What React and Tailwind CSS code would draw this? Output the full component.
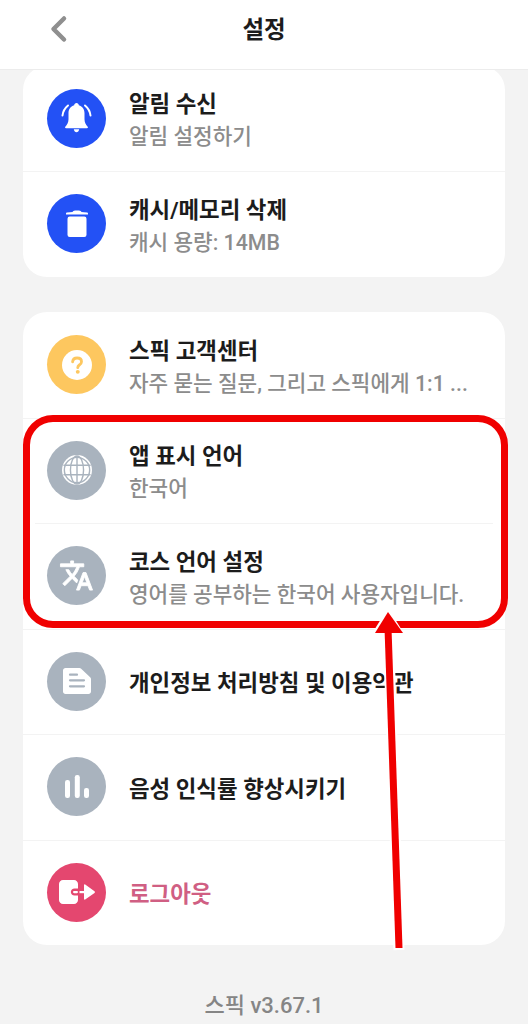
function BellIcon() {
  return (
    <svg viewBox="0 0 31 30" className="h-[30px] w-[31px]" fill="none">
      <path d="M15.500 0c1.300 0 2.200 1 2.300 2.200 3.800 1 5.700 4.200 5.700 8v6c0 3 1.500 5.500 3.200 7.500.5.700.2 1.500-.7 1.500H5c-.9 0-1.200-.8-.7-1.500 1.700-2 3.200-4.500 3.200-7.500v-6c0-3.800 1.900-7 5.700-8 .1-1.200 1-2.200 2.300-2.200z" fill="#fff" />
      <path d="M12.800 26.300h5.400c-.3 1.900-1.400 3-2.700 3s-2.400-1.100-2.700-3z" fill="#fff" />
      <path d="M1.500 12.500C2 8 4 5 7 2.500M29.500 12.500C29 8 27 5 24 2.500" stroke="#fff" strokeWidth="2" strokeLinecap="round" />
    </svg>
  );
}

function TrashIcon() {
  return (
    <svg viewBox="0 0 22 27" className="h-[27px] w-[22px]" fill="#fff">
      <path d="M0 3.600c0-.5.4-.9.900-1 2-.3 4-.6 5.600-.7C7 1 8.500.5 11 .5s4 .5 4.500 1.400c1.600.1 3.600.4 5.600.7.500.1.900.5.900 1v.9H0z" />
      <rect x="1.500" y="6.500" width="19" height="20.500" rx="2.200" />
    </svg>
  );
}

function HelpIcon() {
  return (
    <svg viewBox="0 0 32 32" className="h-[30px] w-[30px]">
      <circle cx="16" cy="16" r="16" fill="#fff" />
      <path d="M11.300 12.700c.2-2.600 2.100-4.200 4.800-4.200 2.800 0 4.700 1.600 4.700 3.900 0 1.700-1 2.700-2.300 3.600-1.100.8-1.700 1.400-1.700 2.800" fill="none" stroke="#fdc75f" strokeWidth="3" strokeLinecap="round" />
      <circle cx="16.800" cy="23.300" r="2.100" fill="#fdc75f" />
    </svg>
  );
}

function GlobeIcon() {
  return (
    <svg viewBox="0 0 32 32" className="h-[30px] w-[30px]">
      <circle cx="16" cy="16" r="16" fill="#fff" />
      <g fill="none" stroke="#a9b3be" strokeWidth="1.500">
        <circle cx="16" cy="16" r="13.500" />
        <ellipse cx="16" cy="16" rx="7" ry="15" />
        <path d="M16 1v30M1.500 11h29M1.500 21h29" />
      </g>
    </svg>
  );
}

function TranslateIcon() {
  return (
    <svg viewBox="0 0 24 24" className="h-[35px] w-[35px]" fill="#fff" stroke="#fff" strokeWidth="0.6">
      <path d="M12.870 15.070l-2.540-2.510.03-.03A17.520 17.520 0 0 0 14.070 6H17V4h-7V2H8v2H1v1.990h11.170C11.500 7.920 10.440 9.750 9 11.350 8.070 10.320 7.300 9.190 6.690 8h-2c.73 1.630 1.730 3.170 2.980 4.560l-5.090 5.020L4 19l5-5 3.110 3.110.76-2.040zM18.500 10h-2L12 22h2l1.120-3h4.750L21 22h2l-4.500-12zm-2.620 7l1.620-4.330L19.120 17h-3.240z" />
    </svg>
  );
}

function DocIcon() {
  return (
    <svg viewBox="0 0 28 26" className="h-[26px] w-[28px]">
      <path d="M0 2.500C0 1.100 1.100 0 2.500 0h14c.5 0 1 .2 1.400.6l9.500 9c.4.4.6.9.6 1.400v12.500c0 1.400-1.100 2.500-2.500 2.500H2.500C1.100 26 0 24.900 0 23.500z" fill="#fff" />
      <path d="M7 6.700h7M7 12.300h14M7 18.300h14" stroke="#a9b3be" strokeWidth="2.200" strokeLinecap="round" />
    </svg>
  );
}

function BarsIcon() {
  return (
    <svg viewBox="0 0 24 23" className="h-[23px] w-[24px]" fill="#fff">
      <rect x="0" y="5" width="5" height="18" rx="2.200" />
      <rect x="9.800" y="0" width="5" height="23" rx="2.200" />
      <rect x="19" y="13" width="5" height="10" rx="2.200" />
    </svg>
  );
}

function LogoutIcon() {
  return (
    <svg viewBox="0 0 36 24" className="h-[24px] w-[36px]" fill="#fff">
      <path d="M0 4c0-2.200 1.800-4 4-4h11c2.200 0 4 1.800 4 4v4.500h-3.500c-2.100 0-3.700 1.600-3.700 3.500s1.600 3.500 3.700 3.500H19V20c0 2.200-1.800 4-4 4H4c-2.200 0-4-1.800-4-4z" />
      <rect x="14" y="11" width="5" height="2.200" rx="1.100" />
      <rect x="20.500" y="11" width="5" height="2.200" />
      <path d="M25 5c0-.6.700-1 1.200-.6l9.300 6.800c.6.400.6 1.300 0 1.700l-9.300 6.700c-.5.400-1.200 0-1.200-.6z" />
    </svg>
  );
}

function SettingRow({ circle, icon, title, subtitle, titleColor = 'text-[#1c1c1c]', divider = '' }) {
  return (
    <div className="relative flex h-[105.5px] items-center gap-[23px] pl-[24px] pr-4">
      {divider && <div className={`absolute top-0 h-px bg-[#f3f3f3] ${divider}`} />}
      <div className={`flex h-[59px] w-[59px] shrink-0 items-center justify-center rounded-full ${circle}`}>
        {icon}
      </div>
      <div className="min-w-0 pt-[5px]">
        <p className={`text-[22.4px] font-bold leading-[31px] ${titleColor}`}>{title}</p>
        {subtitle && <p className="mt-[2px] text-[21.3px] font-medium leading-[30px] whitespace-nowrap text-[#8c8c8c]">{subtitle}</p>}
      </div>
    </div>
  );
}

export default function App() {
  return (
    <div className="relative h-[1024px] w-[528px] overflow-hidden bg-[#f3f3f3] [font-family:Roboto,'Noto_Sans_CJK_KR',sans-serif]">
      <header className="relative z-10 flex h-[70px] items-center justify-center border-b border-[#ececec] bg-white pb-[8px]">
        <button type="button" className="absolute left-[48px] top-[15px]">
          <svg viewBox="0 0 20 28" className="h-[28px] w-[20px]" fill="none">
            <path d="M16 3.500L5.500 14 16 24.500" stroke="#8f8f8f" strokeWidth="4.500" strokeLinecap="round" strokeLinejoin="round" />
          </svg>
        </button>
        <h1 className="text-[23.5px] font-bold text-[#1c1c1c]">설정</h1>
      </header>

      <main className="-mt-[4.5px] px-[23px]">
        <section className="rounded-[24px] bg-white">
          <SettingRow circle="bg-[#2351f5]" icon={<BellIcon />} title="알림 수신" subtitle="알림 설정하기" />
          <SettingRow circle="bg-[#2351f5]" icon={<TrashIcon />} title="캐시/메모리 삭제" subtitle="캐시 용량: 14MB" divider="left-0 right-0" />
        </section>

        <section className="mt-[35.5px] rounded-[24px] bg-white">
          <SettingRow circle="bg-[#fdc75f]" icon={<HelpIcon />} title="스픽 고객센터" subtitle="자주 묻는 질문, 그리고 스픽에게 1:1 ..." />
          <SettingRow circle="bg-[#a9b3be]" icon={<GlobeIcon />} title="앱 표시 언어" subtitle="한국어" divider="left-0 right-0" />
          <SettingRow circle="bg-[#a9b3be]" icon={<TranslateIcon />} title="코스 언어 설정" subtitle="영어를 공부하는 한국어 사용자입니다." divider="left-[12px] right-[12px]" />
          <SettingRow circle="bg-[#a9b3be]" icon={<DocIcon />} title="개인정보 처리방침 및 이용약관" divider="left-0 right-0" />
          <SettingRow circle="bg-[#a9b3be]" icon={<BarsIcon />} title="음성 인식률 향상시키기" divider="left-0 right-0" />
          <SettingRow circle="bg-[#e4476f]" icon={<LogoutIcon />} title="로그아웃" titleColor="text-[#d05f83]" divider="left-0 right-0" />
        </section>

        <p className="mt-[46px] text-center text-[22px] font-medium leading-[30px] text-[#858585]">스픽 v3.67.1</p>
      </main>

      {/* red annotation over the screenshot */}
      <div className="absolute left-[23px] top-[415px] h-[213px] w-[485px] rounded-[30px] border-[7px] border-[#f00000]" />
      <svg className="absolute inset-0 h-full w-full" viewBox="0 0 528 1024" fill="none">
        <path d="M388 620L399 950" stroke="#fff" strokeWidth="11" />
        <path d="M388 608L371 635H405Z" fill="#fff" />
        <path d="M388 628L399 948" stroke="#f00000" strokeWidth="7" />
        <path d="M388 612L375 633H403Z" fill="#f00000" />
      </svg>
    </div>
  );
}
